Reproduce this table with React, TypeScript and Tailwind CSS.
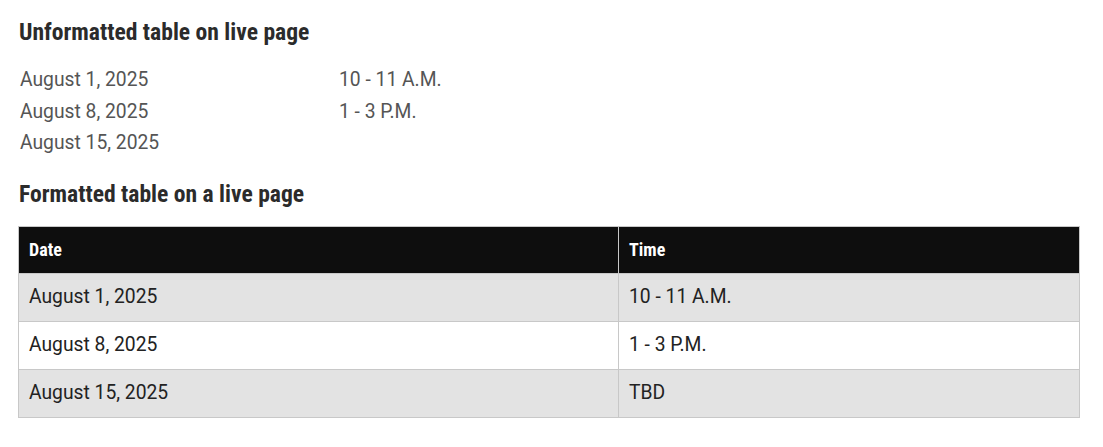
const rows = [
  { date: "August 1, 2025", time: "10 - 11 A.M." },
  { date: "August 8, 2025", time: "1 - 3 P.M." },
  { date: "August 15, 2025", time: "TBD" },
];

const cond = "font-['Roboto_Condensed',Roboto,sans-serif] [font-stretch:condensed] font-bold";

export default function App() {
  return (
    <div className="min-h-screen bg-white pl-[19px] pr-[23px] pt-[18px] font-['Roboto',sans-serif]">
      <h2 className={`${cond} text-[23.6px] leading-[28px] text-[#2b2b2b]`}>
        Unformatted table on live page
      </h2>

      <table className="mt-[18px] text-[19.3px] leading-[31.5px] text-[#555]">
        <tbody>
          {rows.map((r) => (
            <tr key={r.date}>
              <td className="w-[320px] p-0 pl-px">{r.date}</td>
              <td className="p-0">{r.time === "TBD" ? "" : r.time}</td>
            </tr>
          ))}
        </tbody>
      </table>

      <h2 className={`${cond} mt-[21px] text-[23.6px] leading-[28px] text-[#2b2b2b]`}>
        Formatted table on a live page
      </h2>

      <table className="mt-[18px] w-[1062px] -ml-px border-collapse text-[19.3px] text-[#222]">
        <thead>
          <tr className="bg-[#0e0e0e]">
            <th
              className={`${cond} h-[47px] w-[600px] border border-[#c8c8c8] px-[10px] text-left text-[18px] text-white`}
            >
              Date
            </th>
            <th
              className={`${cond} h-[47px] border border-[#c8c8c8] px-[10px] text-left text-[18px] text-white`}
            >
              Time
            </th>
          </tr>
        </thead>
        <tbody>
          {rows.map((r, i) => (
            <tr key={r.date} className={i % 2 === 0 ? "bg-[#e3e3e3]" : "bg-white"}>
              <td className="h-[48px] border border-[#c8c8c8] px-[10px]">{r.date}</td>
              <td className="h-[48px] border border-[#c8c8c8] px-[10px]">{r.time}</td>
            </tr>
          ))}
        </tbody>
      </table>
    </div>
  );
}
